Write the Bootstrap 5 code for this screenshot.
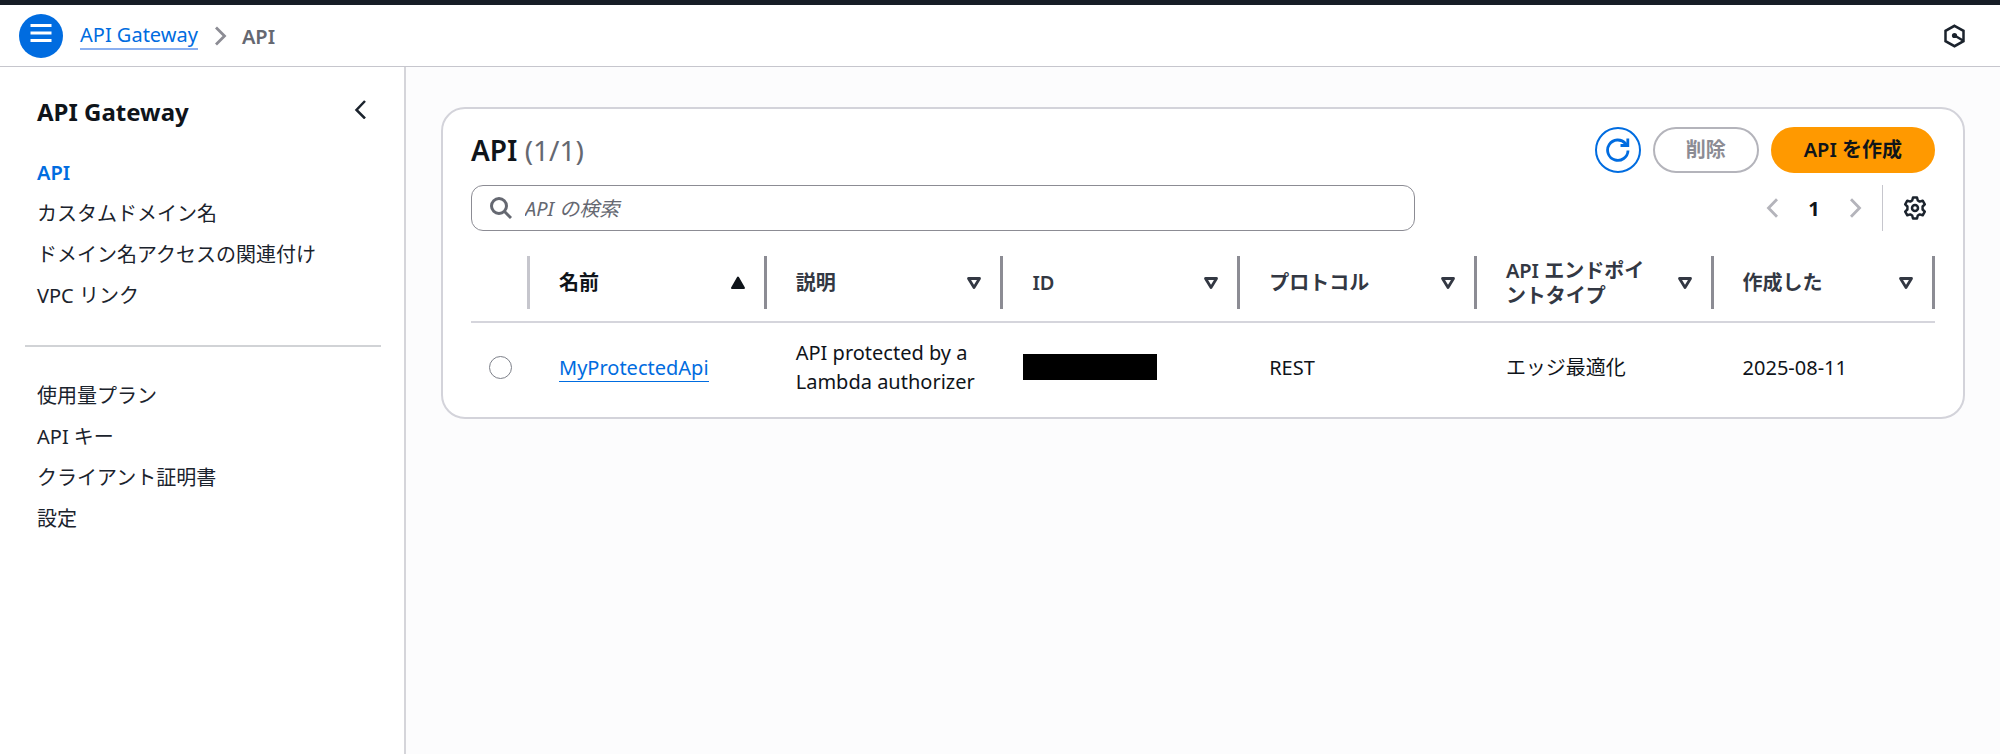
<!DOCTYPE html>
<html lang="ja">
<head>
<meta charset="utf-8">
<meta name="viewport" content="width=device-width, initial-scale=1">
<title>API Gateway</title>
<link href="https://cdn.jsdelivr.net/npm/bootstrap@5.3.0/dist/css/bootstrap.min.css" rel="stylesheet">
<style>
  body { font-family: "Noto Sans", "Noto Sans CJK JP", sans-serif; font-size: 20px; line-height: 29px; color: #0f141a; background: #fff; }
  svg { display: block; fill: none; flex: none; }
  a { color: #006ce0; }
  .topline { height: 5px; background: #161d26; }
  .crumbbar { height: 62px; padding: 0 34px 0 19px; border-bottom: 1px solid #c6c6cd; }
  .menu-btn { width: 44px; height: 44px; background: #006ce0; color: #fff; padding: 0 0 6px; }
  .crumbs { margin-left: 17px; gap: 14px; padding-top: 1px; }
  .link-line { text-decoration: none; border-bottom: 2px solid #8aaff0; line-height: 26px; }
  .link-line.strong-line { border-bottom: 1px solid #006ce0; }
  .crumb-now { color: #656871; font-weight: 600; }
  .plain-btn { background: none; border: 0; padding: 0; color: inherit; display: flex; }
  .side { width: 406px; flex: none; border-right: 2px solid #d5d5da; padding: 28px 23px 0 25px; }
  .side-head { padding: 0 12px; }
  .side-title { font-size: 24px; line-height: 34px; font-weight: 700; margin: 0 0 29px; }
  .side-list { padding: 0 12px; gap: 12px; margin: 0; }
  .side-list a { color: #1b232d; text-decoration: none; }
  .side-list a.current { color: #006ce0; font-weight: 600; }
  .side-rule { border-top: 2px solid #d1d3d6; margin: 35px 0 34px; opacity: 1; }
  .work { background: #fcfcfd; padding: 40px 35px; min-width: 0; }
  .panel { background: #fff; border: 2px solid #d3d3da; border-radius: 24px; padding: 18px 28px 21px; }
  .panel-title { font-size: 28px; line-height: 40px; font-weight: 600; margin: 0; }
  .panel-title span { color: #656871; font-weight: 400; }
  .actions { gap: 12px; }
  .tools { margin-top: 12px; }
  .pill { height: 46px; border-radius: 23px; font-size: 20px; font-weight: 600; line-height: 28px; padding: 0 31px; border: 2px solid; }
  .pill-create, .pill-create:hover { background: #ff9900; border-color: #ff9900; color: #0f141a; }
  .pill-off, .pill-off:disabled { background: #fff; border-color: #b4b4bb; color: #8c8c94; opacity: 1; }
  .round-btn, .round-btn:hover { width: 46px; border-radius: 50%; padding: 0; color: #006ce0; border: 2px solid #006ce0; }
  .search-box { width: 64.5%; height: 46px; border: 1px solid #8c8c94; border-radius: 12px; padding: 0 18px; gap: 13px; color: #656871; }
  .search-box input { border: 0; outline: 0; background: none; font-size: 20px; padding: 0; height: 40px; color: #0f141a; }
  .search-box input::placeholder { color: #656871; font-style: italic; opacity: 1; }
  .pager { color: #b4b4bb; }
  .pager b { width: 62px; text-align: center; color: #0f141a; }
  .tools-end { height: 46px; border-left: 1px solid #c6c6cd; margin-left: 17px; padding: 0 8px 0 20px; color: #1b232d; }
  .api-table { table-layout: fixed; width: 100%; margin-top: 13px; }
  .api-table .pick { width: 59px; }
  .api-table .wide { width: 16.17%; }
  .api-table th { padding: 12px 0; height: 78px; border-bottom: 2px solid #d5d5dc; font-weight: 600; }
  .head-cell { height: 53px; padding: 0 18px 0 29px; border-right: 3px solid #8c8c94; line-height: 25px; color: #333843; }
  .head-cell.sorted { color: #0f141a; }
  .head-cell.first { border-color: #c6c6cd; }
  .head-cell span { max-width: 142px; }
  .api-table td { padding: 15px 0 0 29px; height: 74px; vertical-align: middle; }
  .api-table td.pick { padding-left: 18px; }
  .api-table td.masked { padding-left: 20px; }
  .mask { width: 134px; height: 26px; background: #000; }
  .form-check-input.dot { width: 23px; height: 23px; margin: 0; border: 1px solid #7d8089; display: block; }
</style>
</head>
<body class="d-flex flex-column min-vh-100">
<div class="topline"></div>
<header class="crumbbar d-flex align-items-center">
  <button class="btn menu-btn rounded-circle d-flex align-items-center justify-content-center border-0" type="button" aria-label="メニュー">
    <svg width="22" height="20" viewBox="0 0 22 20" stroke="currentColor" stroke-width="3"><path d="M.5 2.5h21M.5 10h21M.5 17.500h21"/></svg>
  </button>
  <nav class="crumbs d-flex align-items-center" aria-label="パンくず">
    <a class="link-line" href="#">API Gateway</a>
    <svg width="16" height="20" viewBox="0 0 16 20" stroke="#8c8c94" stroke-width="2.800"><path d="M4 1.500 12.500 10 4 18.500"/></svg>
    <span class="crumb-now">API</span>
  </nav>
  <button class="plain-btn ms-auto" type="button" aria-label="Amazon Q">
    <svg width="23" height="24" viewBox="0 0 23 24" stroke="#1b232d" stroke-width="2.500"><path d="M11.500 1.800 20.500 6.800V17.200L11.500 22.200 2.500 17.200V6.800Z"/><circle cx="11.500" cy="11.500" r="2.600" fill="#1b232d" stroke="none"/><path d="m11.500 11.500 8.500 5"/></svg>
  </button>
</header>

<div class="d-flex flex-grow-1">
  <aside class="side">
    <div class="side-head d-flex justify-content-between align-items-start">
      <h1 class="side-title">API Gateway</h1>
      <button class="plain-btn pt-1" type="button" aria-label="閉じる">
        <svg width="16" height="20" viewBox="0 0 16 20" stroke="#1b232d" stroke-width="2.500"><path d="M12 2 3.500 11l8.500 8.500"/></svg>
      </button>
    </div>
    <ul class="side-list list-unstyled d-flex flex-column">
      <li><a class="current" href="#">API</a></li>
      <li><a href="#">カスタムドメイン名</a></li>
      <li><a href="#">ドメイン名アクセスの関連付け</a></li>
      <li><a href="#">VPC リンク</a></li>
    </ul>
    <hr class="side-rule">
    <ul class="side-list list-unstyled d-flex flex-column">
      <li><a href="#">使用量プラン</a></li>
      <li><a href="#">API キー</a></li>
      <li><a href="#">クライアント証明書</a></li>
      <li><a href="#">設定</a></li>
    </ul>
  </aside>

  <main class="work flex-grow-1">
    <section class="panel">
      <div class="d-flex align-items-center justify-content-between">
        <h2 class="panel-title">API <span>(1/1)</span></h2>
        <div class="actions d-flex">
          <button class="btn pill round-btn d-flex align-items-center justify-content-center" type="button" aria-label="更新">
            <svg width="26" height="26" viewBox="0 0 26 26" stroke="currentColor" stroke-width="2.800"><path d="M23 13.500A10.200 10.200 0 1 1 20.500 6.500l2 2"/><path d="M22.800 1.500v7H15.500"/></svg>
          </button>
          <button class="btn pill pill-off" type="button" disabled>削除</button>
          <button class="btn pill pill-create" type="button">API を作成</button>
        </div>
      </div>
      <div class="tools d-flex align-items-center justify-content-between">
        <label class="search-box d-flex align-items-center">
          <svg width="22" height="22" viewBox="0 0 22 22" stroke="currentColor" stroke-width="3"><circle cx="9" cy="9" r="7.500"/><path d="m14.500 14.500 6.500 6.500"/></svg>
          <input class="flex-grow-1" type="search" placeholder="API の検索" aria-label="API の検索">
        </label>
        <div class="d-flex align-items-center">
          <div class="pager d-flex align-items-center">
            <button class="plain-btn" type="button" aria-label="前へ"><svg width="20" height="20" viewBox="0 0 20 20" stroke="currentColor" stroke-width="2.800"><path d="m14 1.200-8.500 8.800 8.500 8.800"/></svg></button>
            <b>1</b>
            <button class="plain-btn" type="button" aria-label="次へ"><svg width="20" height="20" viewBox="0 0 20 20" stroke="currentColor" stroke-width="2.800"><path d="m6 1.200 8.500 8.800L6 18.800"/></svg></button>
          </div>
          <div class="tools-end d-flex align-items-center">
            <button class="plain-btn" type="button" aria-label="設定">
              <svg width="24" height="24" viewBox="0 0 24 24" stroke="currentColor" stroke-width="2.500" stroke-linejoin="round"><path d="M10 1.500h4l.8 3 1.900 1.100 3-.9 2.100 3.600-2.200 2.200v3l2.200 2.200-2.100 3.600-3-.9-1.900 1.100-.8 3h-4l-.8-3-1.900-1.100-3 .9-2.100-3.600 2.200-2.200v-3L2.200 8.300l2.100-3.600 3 .9 1.900-1.100Z"/><circle cx="12" cy="12" r="3"/></svg>
            </button>
          </div>
        </div>
      </div>

      <table class="api-table">
        <colgroup><col class="pick"><col class="wide"><col class="wide"><col class="wide"><col class="wide"><col class="wide"><col></colgroup>
        <thead>
          <tr>
            <th class="pick" scope="col" aria-label="選択"><div class="head-cell first"></div></th>
            <th scope="col"><div class="head-cell sorted d-flex align-items-center justify-content-between"><span>名前</span><svg width="16" height="14" viewBox="0 0 16 14" stroke="currentColor" stroke-width="2" stroke-linejoin="round"><path fill="currentColor" d="M8 1.500 14 12H2Z"/></svg></div></th>
            <th scope="col"><div class="head-cell d-flex align-items-center justify-content-between"><span>説明</span><svg width="16" height="14" viewBox="0 0 16 14" stroke="currentColor" stroke-width="2.800" stroke-linejoin="round"><path d="M2.500 2.500h11L8 11.500Z"/></svg></div></th>
            <th scope="col"><div class="head-cell d-flex align-items-center justify-content-between"><span>ID</span><svg width="16" height="14" viewBox="0 0 16 14" stroke="currentColor" stroke-width="2.800" stroke-linejoin="round"><path d="M2.500 2.500h11L8 11.500Z"/></svg></div></th>
            <th scope="col"><div class="head-cell d-flex align-items-center justify-content-between"><span>プロトコル</span><svg width="16" height="14" viewBox="0 0 16 14" stroke="currentColor" stroke-width="2.800" stroke-linejoin="round"><path d="M2.500 2.500h11L8 11.500Z"/></svg></div></th>
            <th scope="col"><div class="head-cell d-flex align-items-center justify-content-between"><span>API エンドポイントタイプ</span><svg width="16" height="14" viewBox="0 0 16 14" stroke="currentColor" stroke-width="2.800" stroke-linejoin="round"><path d="M2.500 2.500h11L8 11.500Z"/></svg></div></th>
            <th scope="col"><div class="head-cell d-flex align-items-center justify-content-between"><span>作成した</span><svg width="16" height="14" viewBox="0 0 16 14" stroke="currentColor" stroke-width="2.800" stroke-linejoin="round"><path d="M2.500 2.500h11L8 11.500Z"/></svg></div></th>
          </tr>
        </thead>
        <tbody>
          <tr>
            <td class="pick"><input class="form-check-input dot" type="radio" name="api" aria-label="MyProtectedApi"></td>
            <td><a class="link-line strong-line" href="#">MyProtectedApi</a></td>
            <td>API protected by a<br>Lambda authorizer</td>
            <td class="masked"><div class="mask"></div></td>
            <td>REST</td>
            <td>エッジ最適化</td>
            <td>2025-08-11</td>
          </tr>
        </tbody>
      </table>
    </section>
  </main>
</div>
<script src="https://cdn.jsdelivr.net/npm/bootstrap@5.3.0/dist/js/bootstrap.bundle.min.js"></script>
</body>
</html>
